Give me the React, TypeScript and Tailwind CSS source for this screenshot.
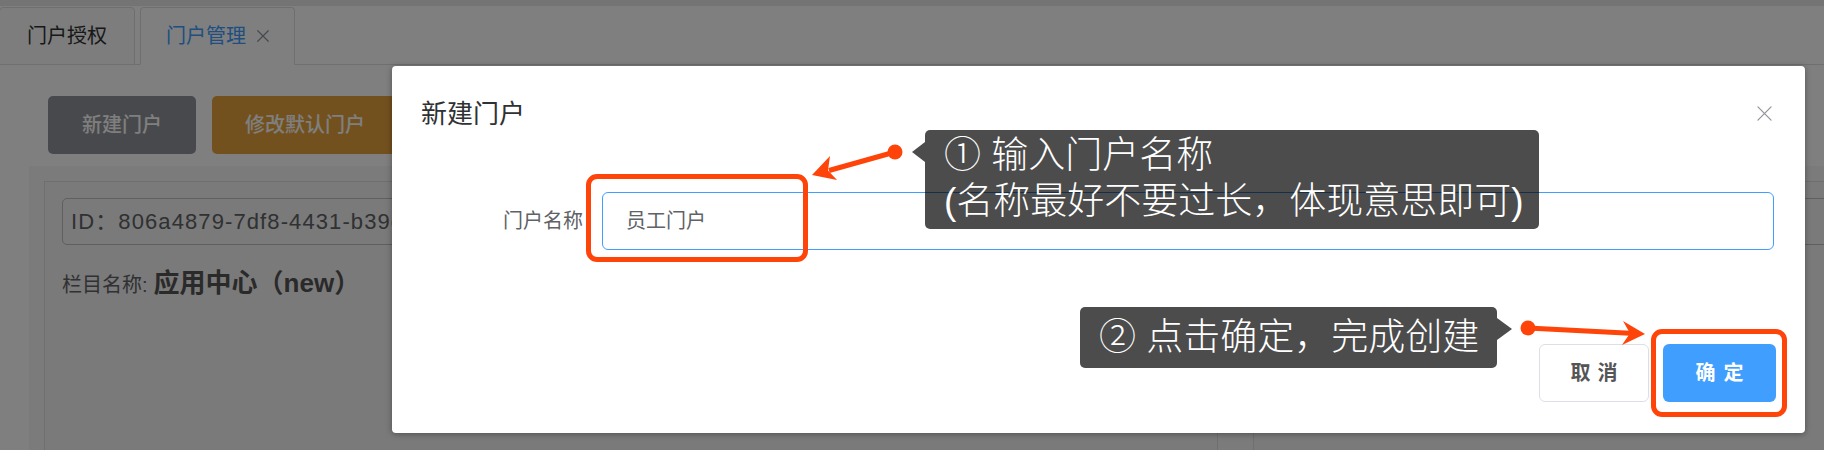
import React from "react";

function XIcon({ size, color, width }: { size: number; color: string; width: number }) {
  return (
    <svg width={size} height={size} viewBox="0 0 16 16" fill="none">
      <path d="M1 1L15 15M15 1L1 15" stroke={color} strokeWidth={width} strokeLinecap="round" />
    </svg>
  );
}

function Card({ id, title }: { id: string; title: string }) {
  return (
    <div className="w-[1174px] shrink-0 border border-[#dcdfe6] bg-[#f4f4f4] px-[17px] pt-[16px]">
      <div className="flex h-[47px] items-center overflow-hidden whitespace-nowrap rounded-[5px] border border-[#bfbfbf] bg-[#f4f4f4] px-[8px] text-[22px] tracking-[1.1px] text-[#606266]">
        {id}
      </div>
      <div className="mt-[20px] flex items-baseline whitespace-nowrap">
        <span className="text-[20px] leading-[36px] text-[#606266]">栏目名称:</span>
        <span className="ml-[6px] text-[26px] font-bold leading-[36px] text-[#555555]">{title}</span>
      </div>
    </div>
  );
}

export default function App() {
  return (
    <div className="relative h-[450px] w-[1824px] overflow-hidden bg-white font-['Liberation_Sans','Noto_Sans_CJK_SC',sans-serif]">
      {/* page underneath */}
      <div className="h-[6px] bg-[#e9e9e9]" />
      <div className="flex h-[59px] items-end gap-[5px] border-b border-[#dcdfe6]">
        <div className="-mb-px -ml-px flex h-[58px] w-[136px] items-center justify-center rounded-t-[4px] border border-[#dcdfe6] bg-[#fafafa] text-[20px] text-[#303133]">
          门户授权
        </div>
        <div className="-mb-px flex h-[58px] w-[155px] items-center justify-center gap-[11px] rounded-t-[4px] border border-[#dcdfe6] border-b-white bg-white text-[20px] text-[#409eff]">
          <span>门户管理</span>
          <XIcon size={12} color="#909399" width={1.6} />
        </div>
      </div>
      <div className="flex gap-4 pl-[48px] pt-[31px]">
        <div className="flex h-[58px] w-[148px] items-center justify-center rounded-[5px] bg-[#909399] text-[20px] font-medium text-white">
          新建门户
        </div>
        <div className="flex h-[58px] w-[186px] items-center justify-center rounded-[5px] bg-[#e6a23c] text-[20px] font-medium text-white">
          修改默认门户
        </div>
      </div>
      <div className="ml-[29px] mt-[12px] flex h-[300px] gap-[35px] bg-[#f7f7f7] pl-[15px] pt-[15px]">
        <Card id="ID：806a4879-7df8-4431-b39e-5c1d7a9f20e8" title="应用中心（new）" />
        <Card id="ID：3c7e91f0-2b4d-4e8a-9f16-a0b5d2c8e7f2 *" title="常用应用" />
      </div>

      {/* mask */}
      <div className="absolute inset-0 bg-black/50" />

      {/* dialog */}
      <div className="absolute left-[392px] top-[66px] h-[367px] w-[1413px] rounded-[4px] bg-white shadow-[0_1px_6px_rgba(0,0,0,0.35)]">
        <div className="pl-[29px] pt-[30px] text-[26px] leading-[36px] text-[#303133]">新建门户</div>
        <div className="absolute right-[33px] top-[40px]">
          <XIcon size={15} color="#909399" width={1.3} />
        </div>
        <div className="mt-[60px] flex items-center pl-[29px] pr-[31px]">
          <div className="w-[181px] pr-[19px] text-right text-[20px] text-[#606266]">门户名称</div>
          <div className="flex h-[58px] flex-1 items-center rounded-[6px] border-[1.5px] border-[#409eff] px-[23px] text-[20px] text-[#606266]">
            员工门户
          </div>
        </div>
        <div className="mt-[94px] flex justify-end gap-[14px] pr-[29px]">
          <div className="flex h-[58px] w-[110px] items-center justify-center gap-[7px] rounded-[6px] border border-[#dcdfe6] bg-white text-[20px] font-semibold text-[#555555]">
            <span>取</span>
            <span>消</span>
          </div>
          <div className="flex h-[58px] w-[113px] items-center justify-center gap-[8px] rounded-[6px] bg-[#409eff] text-[20px] font-semibold text-white">
            <span>确</span>
            <span>定</span>
          </div>
        </div>

        {/* annotations */}
        <div className="absolute left-[194px] top-[108px] h-[88px] w-[222px] rounded-[11px] border-[5px] border-[#ff4409]" />
        <div className="absolute left-[1259px] top-[263px] h-[88px] w-[136px] rounded-[11px] border-[5px] border-[#ff4409]" />

        <div className="absolute left-[533px] top-[64px] h-[99px] w-[614px] whitespace-nowrap rounded-[5px] bg-black/70 pl-[19px] pt-[3px] text-[37px] font-light leading-[46px] text-white">
          <div>① 输入门户名称</div>
          <div>(名称最好不要过长，体现意思即可)</div>
        </div>
        <div className="absolute left-[688px] top-[241px] flex h-[61px] w-[417px] items-center whitespace-nowrap rounded-[5px] bg-black/70 pl-[19px] text-[37px] font-light leading-[46px] text-white">
          ② 点击确定，完成创建
        </div>

        <svg className="pointer-events-none absolute left-0 top-0" width="1413" height="367" viewBox="0 0 1413 367">
          <polygon points="533,76 520,86 533,96" fill="rgba(0,0,0,0.7)" />
          <polygon points="1105,252 1120,263 1105,274" fill="rgba(0,0,0,0.7)" />
          <g fill="#ff4409" stroke="none">
            <circle cx="503" cy="86" r="7.5" />
            <line x1="503" y1="86" x2="437" y2="104.5" stroke="#ff4409" strokeWidth="5" />
            <polygon points="420,109 438,90 436,104.5 445,114" />
            <circle cx="1136" cy="262" r="7.5" />
            <line x1="1136" y1="262" x2="1238" y2="267.2" stroke="#ff4409" strokeWidth="5" />
            <polygon points="1253,268 1231,255 1238,267.2 1230,279" />
          </g>
        </svg>
      </div>
    </div>
  );
}
